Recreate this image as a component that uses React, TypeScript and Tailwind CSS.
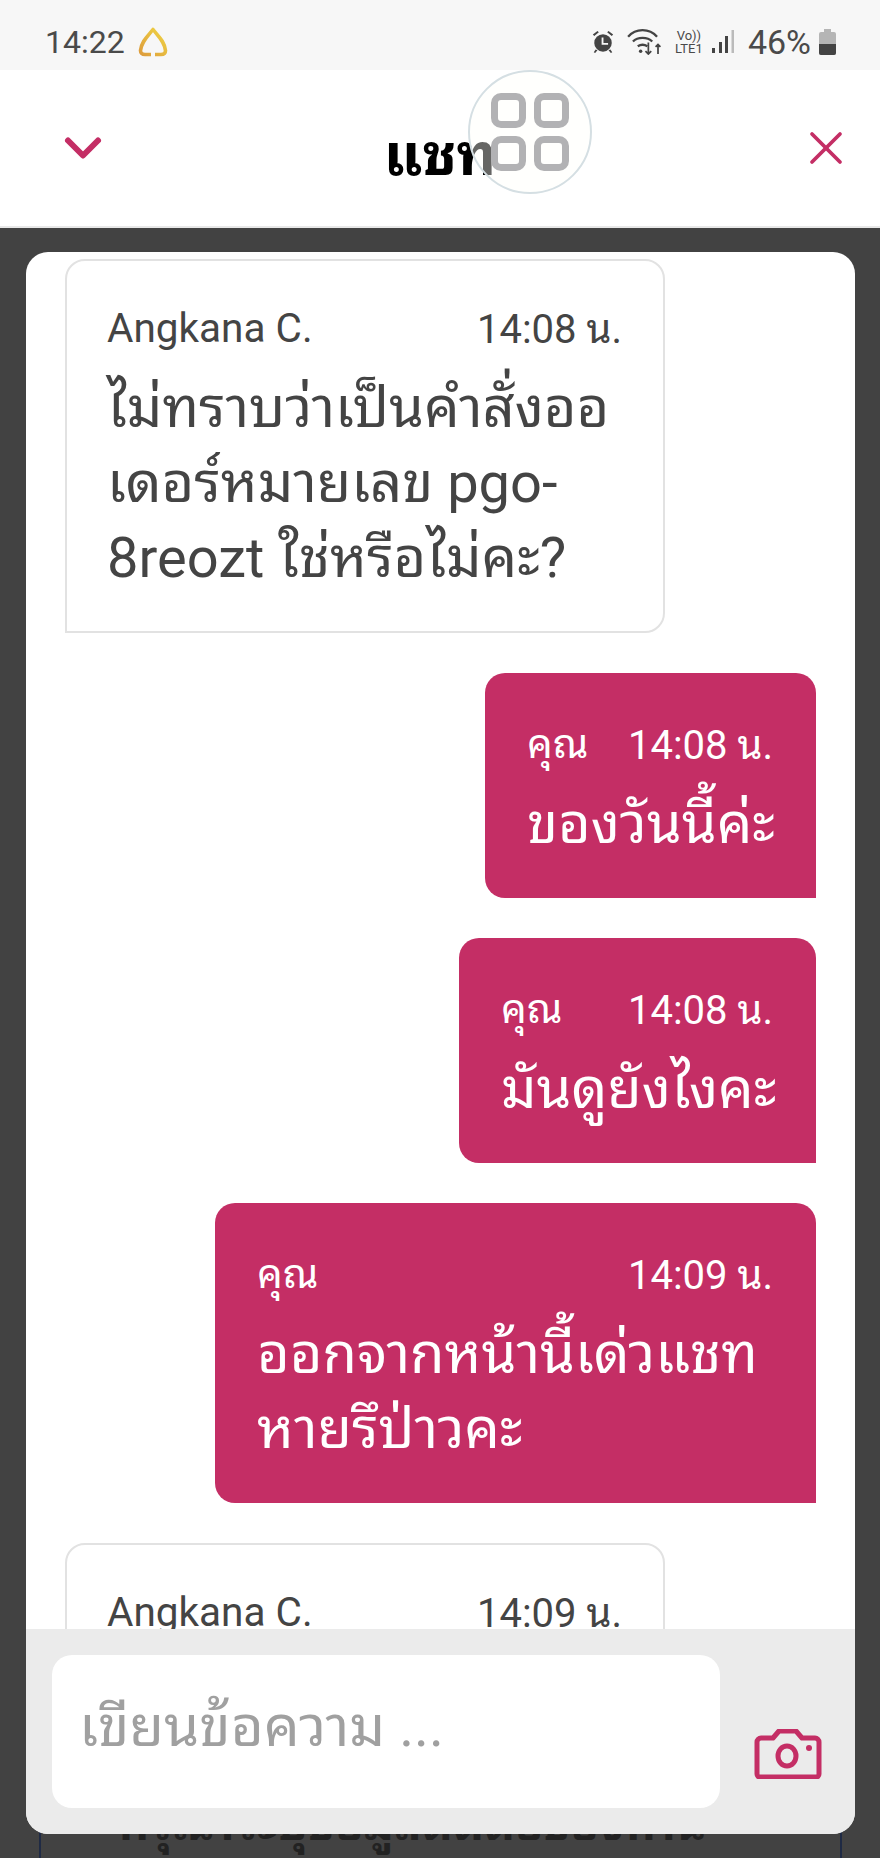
import React from 'react';
import { X, ChevronDown } from 'lucide-react';

interface Msg {
  id: number;
  mine: boolean;
  sender: string;
  time: string;
  lines: string[];
  width: string;
}

const messages: Msg[] = [
  { id: 1, mine: false, sender: 'Angkana C.', time: '14:08 น.', lines: ['ไม่ทราบว่าเป็นคำสั่งออ', 'เดอร์หมายเลข pgo-', '8reozt ใช่หรือไม่คะ?'], width: 'w-[600px]' },
  { id: 2, mine: true, sender: 'คุณ', time: '14:08 น.', lines: ['ของวันนี้ค่ะ'], width: 'w-[331px]' },
  { id: 3, mine: true, sender: 'คุณ', time: '14:08 น.', lines: ['มันดูยังไงคะ'], width: 'w-[357px]' },
  { id: 4, mine: true, sender: 'คุณ', time: '14:09 น.', lines: ['ออกจากหน้านี้เด่วแชท', 'หายรึป่าวคะ'], width: 'w-[601px]' },
  { id: 5, mine: false, sender: 'Angkana C.', time: '14:09 น.', lines: [], width: 'w-[600px]' },
];

const Bubble = ({ msg }: { msg: Msg }) => (
  <div
    className={`${msg.width} shrink-0 ${
      msg.mine
        ? 'self-end bg-[#c42e65] text-white rounded-t-[20px] rounded-bl-[20px] pt-[49px] pb-[36px] pl-[42px] pr-[43px]'
        : 'self-start bg-white text-[#444444] border-2 border-[#e2e2e2] rounded-t-[20px] rounded-br-[20px] pt-[45px] pb-[35px] pl-[40px] pr-[41px]'
    }`}
  >
    <div className="flex justify-between h-[44px] items-center text-[40.500px] leading-[44px]">
      <span>{msg.sender}</span>
      <span className="mt-[4px] text-[40px]">{msg.time}</span>
    </div>
    <div className="mt-[21px] text-[56px] leading-[75px]">
      {msg.lines.map((line) => (
        <div key={line} className="whitespace-nowrap">{line}</div>
      ))}
    </div>
  </div>
);

const App = () => {
  return (
    <div className="font-['Roboto','Noto_Sans_Thai_Looped',sans-serif] w-[880px] h-[1858px] overflow-hidden relative flex flex-col bg-[#424242]">
      {/* Status bar */}
      <div className="h-[70px] shrink-0 bg-[#f7f7f7] flex items-center justify-between pt-[13px] pl-[45px] pr-[44px] text-[#4a4a4a]">
        <div className="flex items-center gap-[13px]">
          <span className="text-[32px] leading-none">14:22</span>
          <svg width="30" height="30" viewBox="0 0 30 30" fill="none">
            <defs>
              <linearGradient id="bell" x1="0" y1="1" x2="1" y2="0">
                <stop offset="0" stopColor="#dd9c3c" />
                <stop offset="1" stopColor="#f0d544" />
              </linearGradient>
            </defs>
            <path d="M13 27.500H7C4 27.500 2.500 26 2.500 23.500C3.500 14 10 9 15 2.500C20 9 26.500 14 27.500 23.500C27.500 26 26 27.500 23 27.500H17" stroke="url(#bell)" strokeWidth="3.600" strokeLinejoin="round" />
          </svg>
        </div>
        <div className="flex items-center">
          <svg width="24" height="24" viewBox="0 0 26 26" fill="#444444">
            <circle cx="13" cy="14" r="9.500" />
            <path d="M2 5l5-4 1.500 1.500-5 4zM24 5l-5-4-1.500 1.500 5 4zM5 21l-2 3 1.500 1 2.500-3zM21 21l2 3-1.500 1-2.500-3z" />
            <path d="M12.500 8v7h6" stroke="#f7f7f7" strokeWidth="2" fill="none" />
          </svg>
          <svg className="ml-[12px]" width="35" height="27" viewBox="0 0 36 28" fill="none" stroke="#444444" strokeWidth="2.400">
            <path d="M1 9c8-9 22-9 30 0M6 14c5-5 15-5 20 0M11 19c3-2 7-2 10 0" />
            <circle cx="14" cy="24" r="1.800" fill="#444444" stroke="none" />
            <path d="M22 15v12M19 24l3 3 3-3M32 27v-10M29.500 19.500l2.500-2.500 2.500 2.500" strokeWidth="1.800" />
          </svg>
          <div className="ml-[11px] w-[32px] flex flex-col items-center text-[13px] leading-[13px]">
            <span>Vo))</span>
            <span>LTE1</span>
          </div>
          <svg className="ml-[7px]" width="22" height="23" viewBox="0 0 22 23" fill="#444444">
            <rect x="0" y="18" width="3" height="5" />
            <rect x="7" y="12" width="3" height="11" />
            <rect x="13" y="6" width="3" height="17" />
            <rect x="19.500" y="0" width="2.500" height="23" fill="#bbbbbb" />
          </svg>
          <span className="ml-[14px] text-[34px] leading-none">46%</span>
          <svg className="ml-[8px]" width="17" height="26" viewBox="0 0 17 26">
            <path d="M5 0h7v3h3a2 2 0 0 1 2 2v19a2 2 0 0 1-2 2H2a2 2 0 0 1-2-2V5a2 2 0 0 1 2-2h3z" fill="#b5b5b5" />
            <path d="M0 15h17v9a2 2 0 0 1-2 2H2a2 2 0 0 1-2-2z" fill="#444444" />
          </svg>
        </div>
      </div>

      {/* Header */}
      <div className="h-[158px] shrink-0 bg-white border-b-2 border-[#e8e8e8] flex items-center pl-[53px] pr-[26px]">
        <div className="flex-1 flex">
          <ChevronDown size={60} strokeWidth={2.400} className="text-[#c42e65]" />
        </div>
        <span className="text-[58px] leading-none font-bold text-black mt-[14px] mr-[27px]">แชท</span>
        <div className="flex-1 flex justify-end">
          <X size={56} strokeWidth={1.600} className="text-[#c42e65]" />
        </div>
      </div>

      {/* Floating menu button over the title */}
      <div className="absolute left-[468px] top-[70px] w-[124px] h-[124px] rounded-full border-2 border-[#d5dfe3] bg-[#fffffb]/40 grid grid-cols-2 content-center justify-center gap-[8px] px-[21px]">
        <div className="w-[35px] h-[35px] rounded-[10px] border-[7px] border-[#b2b2b4]" />
        <div className="w-[35px] h-[35px] rounded-[10px] border-[7px] border-[#b2b2b4]" />
        <div className="w-[35px] h-[35px] rounded-[10px] border-[7px] border-[#b2b2b4]" />
        <div className="w-[35px] h-[35px] rounded-[10px] border-[7px] border-[#b2b2b4]" />
      </div>

      {/* Chat card */}
      <div className="relative z-10 mt-[24px] ml-[26px] mr-[25px] h-[1582px] shrink-0 bg-white rounded-[22px] overflow-hidden flex flex-col">
        <div className="flex-1 min-h-0 overflow-hidden flex flex-col gap-[40px] pt-[7px] pl-[39px] pr-[39px]">
          {messages.map((msg) => (
            <Bubble key={msg.id} msg={msg} />
          ))}
        </div>
        <div className="h-[205px] shrink-0 bg-[#ebebeb] flex items-start pl-[26px] pt-[26px]">
          <div className="w-[668px] h-[153px] bg-white rounded-[20px] flex items-center pl-[27px] pb-[8px] text-[56.500px] leading-[75px] text-[#a0a0a0]">
            เขียนข้อความ ...
          </div>
          <svg className="ml-[34px] mt-[74px]" width="68" height="50" viewBox="0 0 68 50" fill="none" stroke="#c42e65" strokeWidth="5" strokeLinejoin="round">
            <path d="M7 9h12l6-7h17l6 7h13a4 4 0 0 1 4 4v32a3 3 0 0 1-3 3H6a3 3 0 0 1-3-3V13a4 4 0 0 1 4-4z" />
            <ellipse cx="33" cy="27" rx="9" ry="10" />
            <circle cx="55" cy="19" r="3" fill="#c42e65" stroke="none" />
          </svg>
        </div>
      </div>

      {/* Page behind the modal, only its lower edge shows */}
      <div className="relative -mt-[38px] ml-[39px] mr-[38px] flex-1 border-x-2 border-[#1f2a44] flex justify-center pr-[56px] text-[46px] font-bold leading-[56px] text-[#222222] whitespace-nowrap">
        กรุณาระบุข้อมูลติดต่อของท่าน
      </div>
    </div>
  );
};

export default App;
